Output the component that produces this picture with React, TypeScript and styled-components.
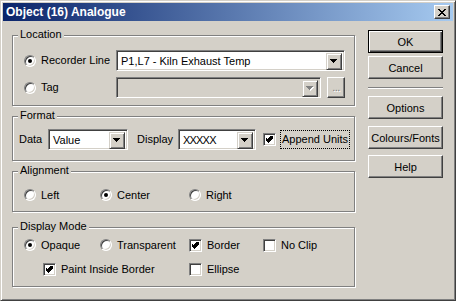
import React from 'react';
import styled, { createGlobalStyle } from 'styled-components';

const FACE = '#d4d0c8';

const Global = createGlobalStyle`
  html, body { margin: 0; padding: 0; background: ${FACE}; }
  body { font-family: "Liberation Sans", Arial, sans-serif; font-size: 11px; color: #000; }
  * { box-sizing: border-box; }
`;

const Window = styled.div`
  width: 456px;
  height: 301px;
  border: 1px solid;
  border-color: ${FACE} #404040 #404040 ${FACE};
  box-shadow: inset 1px 1px 0 #fff, inset -1px -1px 0 #808080;
  padding: 2px;
  background: ${FACE};
  display: flex;
  flex-direction: column;
`;

const TitleBar = styled.div`
  flex: none;
  height: 18px;
  background: linear-gradient(to right, #0a246a, #a6caf0);
  display: flex;
  align-items: center;
  justify-content: space-between;
  padding: 0 3px 0 3px;
`;

const Title = styled.span`
  color: #fff;
  font-weight: bold;
  font-size: 12px;
  line-height: 18px;
`;

const CloseButton = styled.span`
  width: 16px;
  height: 14px;
  background: ${FACE};
  border: 1px solid;
  border-color: #fff #404040 #404040 #fff;
  box-shadow: inset -1px -1px 0 #808080;
  display: flex;
  align-items: center;
  justify-content: center;
  padding-right: 1px;
`;

const Body = styled.div`
  display: flex;
  align-items: flex-start;
  margin-top: 1px;
  padding: 0 0 0 9px;
  gap: 13px;
`;

const Groups = styled.div`
  margin-top: 13px;
  width: 343px;
  display: flex;
  flex-direction: column;
`;

const Group = styled.div<{ $mt: number; $pt: number; $pb: number; $pl?: number }>`
  position: relative;
  margin-top: ${p => p.$mt}px;
  padding: ${p => p.$pt}px 0 ${p => p.$pb}px ${p => p.$pl ?? 11}px;
  border: 1px solid #808080;
  box-shadow: 1px 1px 0 #fff, inset 1px 1px 0 #fff;
`;

const Caption = styled.span`
  position: absolute;
  top: -8px;
  left: 5px;
  padding: 0 2px;
  background: ${FACE};
  line-height: 13px;
`;

const Row = styled.div<{ $mt?: number }>`
  display: flex;
  align-items: center;
  height: 21px;
  margin-top: ${p => p.$mt ?? 0}px;
`;

const Option = styled.div<{ $w?: number; $pl?: number; $span?: boolean; $gap?: number }>`
  display: flex;
  align-items: center;
  gap: ${p => p.$gap ?? 5}px;
  line-height: 13px;
  white-space: nowrap;
  ${p => (p.$w ? `width: ${p.$w}px; flex: none;` : '')}
  ${p => (p.$pl ? `padding-left: ${p.$pl}px;` : '')}
  ${p => (p.$span ? 'grid-column: 1 / 3;' : '')}
`;

const RadioDot = styled.span<{ $checked?: boolean }>`
  flex: none;
  width: 12px;
  height: 12px;
  border-radius: 50%;
  background: #fff;
  border: 1px solid;
  border-color: #808080 #fff #fff #808080;
  box-shadow: inset 1px 1px 0 #404040, inset -1px -1px 0 ${FACE};
  display: flex;
  align-items: center;
  justify-content: center;
  &::after {
    content: '';
    width: 4px;
    height: 4px;
    border-radius: 50%;
    background: #000;
    display: ${p => (p.$checked ? 'block' : 'none')};
  }
`;

const CheckBox = styled.span`
  flex: none;
  width: 13px;
  height: 13px;
  background: #fff;
  border: 1px solid;
  border-color: #808080 #fff #fff #808080;
  box-shadow: inset 1px 1px 0 #404040, inset -1px -1px 0 ${FACE};
  display: flex;
  align-items: center;
  justify-content: center;
`;

const Label = styled.span<{ $w?: number; $pl?: number }>`
  flex: none;
  line-height: 13px;
  white-space: nowrap;
  ${p => (p.$w ? `width: ${p.$w}px;` : '')}
  padding-left: ${p => p.$pl ?? 0}px;
`;

const FocusLabel = styled.span`
  border: 1px dotted #000;
  padding: 2px 1px;
  line-height: 13px;
`;

const Combo = styled.div<{ $w: number; $disabled?: boolean }>`
  flex: none;
  width: ${p => p.$w}px;
  height: 21px;
  display: flex;
  background: ${p => (p.$disabled ? FACE : '#fff')};
  border: 1px solid;
  border-color: #808080 #fff #fff #808080;
  box-shadow: inset 1px 1px 0 #404040, inset -1px -1px 0 ${FACE};
  padding: 2px;
`;

const ComboText = styled.span<{ $tight?: boolean }>`
  flex: 1;
  padding-left: 2px;
  line-height: 17px;
  white-space: nowrap;
  overflow: hidden;
  ${p => (p.$tight ? 'letter-spacing: -0.8px;' : '')}
`;

const DropButton = styled.span`
  flex: none;
  width: 16px;
  height: 17px;
  background: ${FACE};
  border: 1px solid;
  border-color: ${FACE} #404040 #404040 ${FACE};
  box-shadow: inset 1px 1px 0 #fff, inset -1px -1px 0 #808080;
  display: flex;
  align-items: center;
  justify-content: center;
`;

const SmallButton = styled.span`
  flex: none;
  margin-left: 6px;
  width: 18px;
  height: 21px;
  background: ${FACE};
  border: 1px solid;
  border-color: #fff #404040 #404040 #fff;
  box-shadow: inset -1px -1px 0 #808080;
  display: flex;
  align-items: center;
  justify-content: center;
  color: #808080;
  text-shadow: 1px 1px 0 #fff;
  line-height: 13px;
  letter-spacing: -0.5px;
`;

const OptionGrid = styled.div<{ $rowGap?: number }>`
  display: grid;
  grid-template-columns: 76px 89px 74px auto;
  grid-auto-rows: 14px;
  row-gap: ${p => p.$rowGap ?? 0}px;
  align-items: center;
`;

const Buttons = styled.div`
  margin-top: 8px;
  width: 75px;
  display: flex;
  flex-direction: column;
`;

const Button = styled.button<{ $mt?: number; $default?: boolean }>`
  width: 75px;
  height: 23px;
  margin: ${p => p.$mt ?? 0}px 0 0 0;
  padding: 0;
  font-family: "Liberation Sans", Arial, sans-serif;
  font-size: 11px;
  color: #000;
  background: ${FACE};
  border: 1px solid;
  border-color: ${p => (p.$default ? '#000' : '#fff #404040 #404040 #fff')};
  box-shadow: ${p =>
    p.$default
      ? 'inset 1px 1px 0 #fff, inset -1px -1px 0 #404040, inset -2px -2px 0 #808080'
      : 'inset -1px -1px 0 #808080'};
`;

const Separator = styled.div`
  margin-top: 8px;
  height: 2px;
  border-top: 1px solid #808080;
  border-bottom: 1px solid #fff;
`;

const Arrow = ({ disabled }: { disabled?: boolean }) => (
  <svg width="8" height="5" viewBox="0 0 8 5" shapeRendering="crispEdges">
    {disabled && <path d="M1 1h7v1h-1v1h-1v1h-1v1h-1v-1h-1v-1h-1v-1h-1z" fill="#fff" />}
    <path d="M0 0h7v1h-1v1h-1v1h-1v1h-1v-1h-1v-1h-1v-1h-1z" fill={disabled ? '#808080' : '#000'} />
  </svg>
);

const Check = () => (
  <svg width="7" height="7" viewBox="0 0 7 7" shapeRendering="crispEdges">
    <path d="M6 0h1v3h-1v1h-1v1h-1v1h-1v1h-1v-1h-1v-1h-1v-1h-1v-3h1v1h1v1h1v-1h1v-1h1v-1h1z" fill="#000" />
  </svg>
);

const CloseGlyph = () => (
  <svg width="8" height="7" viewBox="0 0 8 7" shapeRendering="crispEdges">
    <path
      d="M0 0h2v1h-2zM6 0h2v1h-2zM1 1h2v1h-2zM5 1h2v1h-2zM2 2h4v1h-4zM3 3h2v1h-2zM2 4h4v1h-4zM1 5h2v1h-2zM5 5h2v1h-2zM0 6h2v1h-2zM6 6h2v1h-2z"
      fill="#000"
    />
  </svg>
);

const Radio = ({ label, checked, w }: { label: string; checked?: boolean; w?: number }) => (
  <Option $w={w}>
    <RadioDot $checked={checked} />
    <span>{label}</span>
  </Option>
);

const Checked = ({ label, checked, pl, span }: { label: string; checked?: boolean; pl?: number; span?: boolean }) => (
  <Option $pl={pl} $span={span}>
    <CheckBox>{checked && <Check />}</CheckBox>
    <span>{label}</span>
  </Option>
);

export default function App() {
  return (
    <>
      <Global />
      <Window>
        <TitleBar>
          <Title>Object (16) Analogue</Title>
          <CloseButton>
            <CloseGlyph />
          </CloseButton>
        </TitleBar>
        <Body>
          <Groups>
            <Group $mt={0} $pt={14} $pb={7}>
              <Caption>Location</Caption>
              <Row>
                <Radio label="Recorder Line" checked w={92} />
                <Combo $w={229}>
                  <ComboText>P1,L7 - Kiln Exhaust Temp</ComboText>
                  <DropButton>
                    <Arrow />
                  </DropButton>
                </Combo>
              </Row>
              <Row $mt={6}>
                <Radio label="Tag" w={92} />
                <Combo $w={205} $disabled>
                  <ComboText />
                  <DropButton>
                    <Arrow disabled />
                  </DropButton>
                </Combo>
                <SmallButton>...</SmallButton>
              </Row>
            </Group>

            <Group $mt={10} $pt={12} $pb={10} $pl={6}>
              <Caption>Format</Caption>
              <Row>
                <Label $w={29}>Data</Label>
                <Combo $w={80}>
                  <ComboText>Value</ComboText>
                  <DropButton>
                    <Arrow />
                  </DropButton>
                </Combo>
                <Label $w={50} $pl={9}>
                  Display
                </Label>
                <Combo $w={78}>
                  <ComboText $tight>XXXXX</ComboText>
                  <DropButton>
                    <Arrow />
                  </DropButton>
                </Combo>
                <Option $pl={7} $gap={4}>
                  <CheckBox>
                    <Check />
                  </CheckBox>
                  <FocusLabel>Append Units</FocusLabel>
                </Option>
              </Row>
            </Group>

            <Group $mt={10} $pt={16} $pb={9}>
              <Caption>Alignment</Caption>
              <OptionGrid>
                <Radio label="Left" />
                <Radio label="Center" checked />
                <Radio label="Right" />
              </OptionGrid>
            </Group>

            <Group $mt={15} $pt={10} $pb={10}>
              <Caption>Display Mode</Caption>
              <OptionGrid $rowGap={10}>
                <Radio label="Opaque" checked />
                <Radio label="Transparent" />
                <Checked label="Border" checked />
                <Checked label="No Clip" />
                <Checked label="Paint Inside Border" checked pl={19} span />
                <Checked label="Ellipse" />
              </OptionGrid>
            </Group>
          </Groups>

          <Buttons>
            <Button $default>OK</Button>
            <Button $mt={3}>Cancel</Button>
            <Separator />
            <Button $mt={7}>Options</Button>
            <Button $mt={7}>Colours/Fonts</Button>
            <Button $mt={6}>Help</Button>
          </Buttons>
        </Body>
      </Window>
    </>
  );
}
